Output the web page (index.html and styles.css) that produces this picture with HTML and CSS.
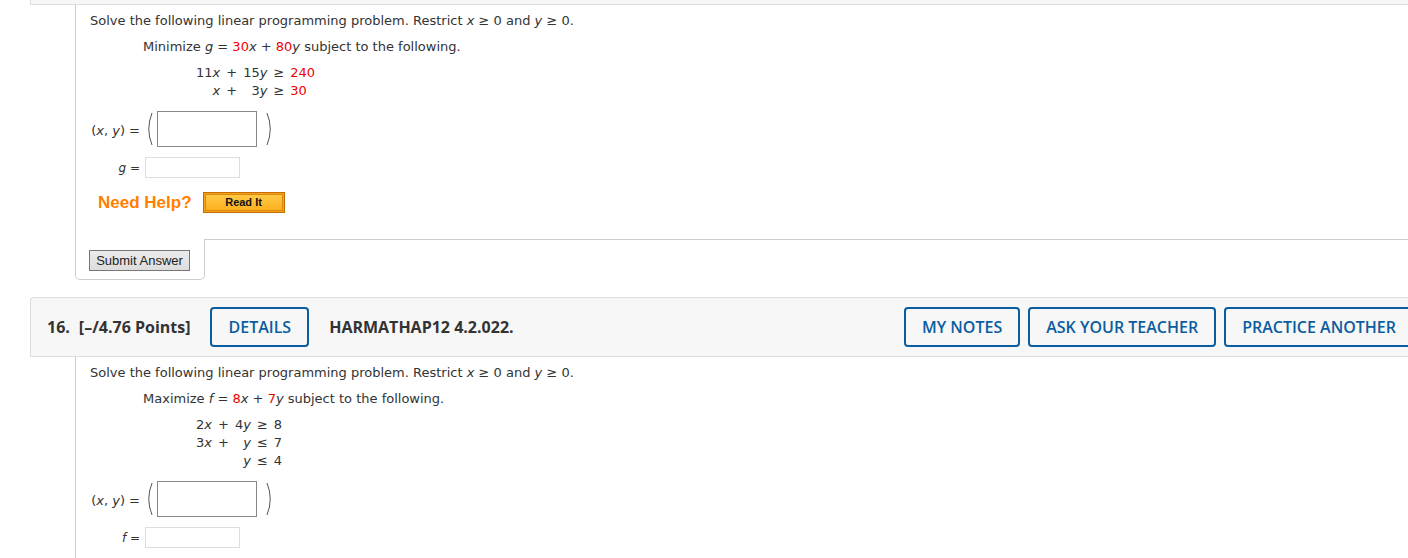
FILE: index.html
```html
<!DOCTYPE html>
<html>
<head>
<meta charset="utf-8">
<link rel="stylesheet" href="styles.css">
</head>
<body>
<div class="page">
  <div class="prev-header"></div>

  <div class="q-body">
    <p class="intro">Solve the following linear programming problem. Restrict <i>x</i> ≥ 0 and <i>y</i> ≥ 0.</p>
    <p class="task">Minimize <i>g</i> = <span class="red">30</span><i>x</i> + <span class="red">80</span><i>y</i> subject to the following.</p>
    <div class="eqs">
      <span class="r">11<i>x</i></span><span>+</span><span class="r">15<i>y</i></span><span>≥</span><span class="red">240</span>
      <span class="r"><i>x</i></span><span>+</span><span class="r">3<i>y</i></span><span>≥</span><span class="red">30</span>
    </div>
    <div class="answers">
      <span class="lbl">(<i>x</i>, <i>y</i>) =</span>
      <span class="pair">
        <svg class="paren" width="8" height="34" viewBox="0 0 8 34"><path d="M7 1 Q0.5 17 7 33" fill="none" stroke="#555" stroke-width="1"/></svg>
        <span class="box"></span>
        <svg class="paren close" width="8" height="34" viewBox="0 0 8 34"><path d="M1 1 Q7.5 17 1 33" fill="none" stroke="#555" stroke-width="1"/></svg>
      </span>
      <span class="lbl lbl-small"><i>g</i> =</span>
      <span class="field"></span>
    </div>
    <div class="help">
      <span class="need">Need Help?</span>
      <span class="readit"><span class="readit-in">Read It</span></span>
    </div>
  </div>

  <div class="submit-row">
    <div class="submit-tab"><button class="submit">Submit Answer</button></div>
    <div class="submit-rest"></div>
  </div>

  <div class="q-header">
    <span class="qnum">16.</span>
    <span class="pts">[–/4.76 Points]</span>
    <span class="btn">DETAILS</span>
    <span class="code">HARMATHAP12 4.2.022.</span>
    <div class="right-btns">
      <span class="btn">MY NOTES</span>
      <span class="btn">ASK YOUR TEACHER</span>
      <span class="btn">PRACTICE ANOTHER</span>
    </div>
  </div>

  <div class="q-body q-body-last">
    <p class="intro">Solve the following linear programming problem. Restrict <i>x</i> ≥ 0 and <i>y</i> ≥ 0.</p>
    <p class="task">Maximize <i>f</i> = <span class="red">8</span><i>x</i> + <span class="red">7</span><i>y</i> subject to the following.</p>
    <div class="eqs">
      <span class="r">2<i>x</i></span><span>+</span><span class="r">4<i>y</i></span><span>≥</span><span>8</span>
      <span class="r">3<i>x</i></span><span>+</span><span class="r"><i>y</i></span><span>≤</span><span>7</span>
      <span class="r"></span><span></span><span class="r"><i>y</i></span><span>≤</span><span>4</span>
    </div>
    <div class="answers">
      <span class="lbl">(<i>x</i>, <i>y</i>) =</span>
      <span class="pair">
        <svg class="paren" width="8" height="34" viewBox="0 0 8 34"><path d="M7 1 Q0.5 17 7 33" fill="none" stroke="#555" stroke-width="1"/></svg>
        <span class="box"></span>
        <svg class="paren close" width="8" height="34" viewBox="0 0 8 34"><path d="M1 1 Q7.5 17 1 33" fill="none" stroke="#555" stroke-width="1"/></svg>
      </span>
      <span class="lbl lbl-small"><i>f</i> =</span>
      <span class="field"></span>
    </div>
  </div>
</div>
</body>
</html>
```

FILE: styles.css
```css
html, body {
  margin: 0;
  padding: 0;
  background: #fff;
  overflow: hidden;
}
.page {
  width: 1430px;
  height: 558px;
  overflow: hidden;
  font-family: "DejaVu Sans", Verdana, sans-serif;
  font-size: 13px;
  color: #333;
}
.prev-header {
  margin-left: 30px;
  height: 4px;
  background: #f6f6f6;
  border-left: 1px solid #ddd;
  border-bottom: 1px solid #ddd;
}
.q-body {
  margin-left: 75px;
  border-left: 1px solid #ccc;
  padding: 8px 0 26px 14px;
}
.q-body-last {
  padding-bottom: 11px;
}
p {
  margin: 0;
}
.intro {
  line-height: 16px;
}
.task {
  margin: 10px 0 0 53px;
  line-height: 16px;
}
.red {
  color: #e00;
}
i {
  font-style: italic;
}
.eqs {
  margin: 9px 0 0 106px;
  display: grid;
  grid-template-columns: auto auto auto auto auto;
  justify-content: start;
  column-gap: 6px;
  line-height: 18px;
}
.eqs .r {
  text-align: right;
}
.answers {
  margin-top: 11px;
  display: grid;
  grid-template-columns: 50px auto;
  justify-content: start;
  column-gap: 5px;
  row-gap: 10px;
  align-items: center;
}
.lbl {
  text-align: right;
  white-space: nowrap;
  padding-top: 3px;
}
.lbl-small {
  padding-top: 0;
  font-size: 12px;
}
.pair {
  display: flex;
  align-items: center;
  height: 36px;
}
.paren {
  display: block;
}
.box {
  display: block;
  width: 98px;
  height: 34px;
  margin-left: 4px;
  border: 1px solid #888;
}
.paren.close {
  margin-left: 9px;
}
.field {
  display: block;
  width: 93px;
  height: 19px;
  border: 1px solid #ddd;
}
.help {
  margin-top: 14px;
  display: flex;
  align-items: center;
  padding-left: 8px;
}
.need {
  font-family: "Liberation Sans", Arial, sans-serif;
  font-weight: bold;
  font-size: 17px;
  color: #ff7f00;
  line-height: 21px;
}
.readit {
  margin-left: 11px;
  display: block;
  width: 80px;
  height: 19px;
  border: 1px solid #c76d00;
  background: #f5a21a;
  padding: 0;
  box-sizing: content-box;
}
.readit-in {
  display: block;
  margin: 1px;
  height: 15px;
  border: 1px solid #d78a10;
  background: linear-gradient(#ffc845, #ffb120);
  font-family: "Liberation Sans", Arial, sans-serif;
  font-weight: bold;
  font-size: 11px;
  line-height: 15px;
  text-align: center;
  color: #111;
}
.submit-row {
  display: flex;
  margin-left: 75px;
}
.submit-tab {
  width: 115px;
  height: 40px;
  padding-left: 13px;
  border-left: 1px solid #ccc;
  border-right: 1px solid #ccc;
  border-bottom: 1px solid #ccc;
  border-radius: 0 0 5px 5px;
}
.submit {
  margin-top: 11px;
  width: 101px;
  height: 21px;
  padding: 0;
  font-family: "Liberation Sans", Arial, sans-serif;
  font-size: 13px;
  color: #222;
  background: linear-gradient(#ececec, #dcdcdc);
  border: 1px solid #777;
  border-radius: 0;
}
.submit-rest {
  flex: 1;
  border-top: 1px solid #ccc;
}
.q-header {
  margin: 17px 0 0 30px;
  height: 58px;
  border: 1px solid #ddd;
  border-right: none;
  border-radius: 4px 0 0 0;
  background: #f7f7f7;
  display: flex;
  align-items: center;
  padding-left: 16px;
  padding-right: 16px;
  font-family: "Open Sans", sans-serif;
  font-size: 16px;
  font-weight: 700;
  color: #333;
}
.pts {
  margin-left: 9px;
}
.btn {
  display: block;
  box-sizing: border-box;
  height: 40px;
  line-height: 36px;
  padding: 0 16px;
  border: 2px solid #0b5d9f;
  border-radius: 4px;
  color: #0b5d9f;
  font-weight: 600;
  background: #f7f7f7;
}
.pts + .btn {
  margin-left: 20px;
}
.code {
  margin-left: 20px;
}
.right-btns {
  margin-left: auto;
  display: flex;
  gap: 8px;
}
```
